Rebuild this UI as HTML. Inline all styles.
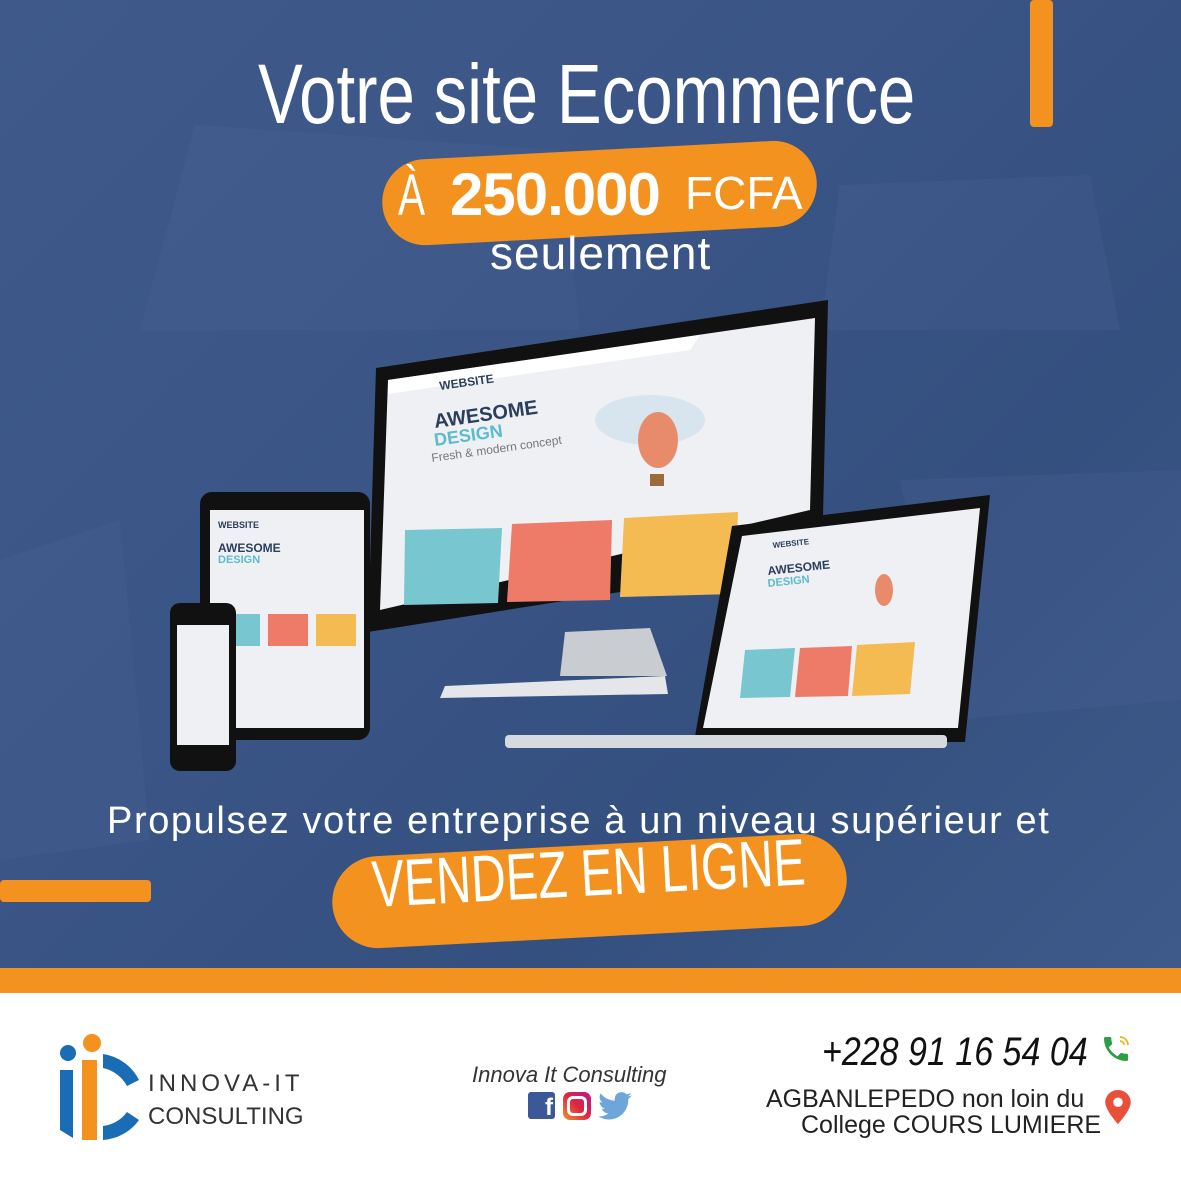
<!DOCTYPE html>
<html><head><meta charset="utf-8"><style>
body{margin:0;width:1181px;height:1181px;overflow:hidden;position:relative;font-family:"Liberation Sans",sans-serif;background:#fff}
.bg{position:absolute;left:0;top:0;width:1181px;height:968px;background:linear-gradient(135deg,#3f5a8a 0%,#3a5586 40%,#34507f 70%,#3d5a8a 100%)}
.t{position:absolute;color:#fff;white-space:nowrap}
</style></head><body>
<div class="bg"></div>
<svg width="1181" height="968" style="position:absolute;left:0;top:0">
<g fill="#4a6596" opacity=".25">
<polygon points="195,125 560,150 580,330 140,330"/>
<polygon points="840,185 1090,175 1120,330 820,330"/>
<polygon points="0,560 120,520 150,840 0,860"/>
<polygon points="900,480 1181,470 1181,700 950,720"/>
</g>
<rect x="1030" y="0" width="23" height="127" rx="4" fill="#f3921f"/>
<rect x="0" y="880" width="151" height="22" rx="4" fill="#f3921f"/>
<polygon points="376,368 828,300 822,560 368,632" fill="#111"/>
<polygon points="388,380 815,318 810,510 380,610" fill="#eef0f3"/>
<polygon points="388,380 700,335 690,350 388,394" fill="#fff"/>
<text x="440" y="390" font-size="12" font-weight="bold" fill="#2c3e5c" transform="rotate(-8 440 390)">WEBSITE</text>
<text x="435" y="428" font-size="20" font-weight="bold" fill="#2c3e5c" transform="rotate(-8 435 428)">AWESOME</text>
<text x="435" y="446" font-size="18" font-weight="bold" fill="#5bbccc" transform="rotate(-8 435 446)">DESIGN</text>
<text x="432" y="462" font-size="12" fill="#777" transform="rotate(-8 432 462)">Fresh &amp; modern concept</text>
<ellipse cx="650" cy="420" rx="55" ry="25" fill="#d8e4ee"/>
<ellipse cx="658" cy="440" rx="20" ry="28" fill="#e88b6a"/><rect x="650" y="474" width="14" height="12" fill="#9b6a3e"/>
<polygon points="405,530 502,528 498,603 404,605" fill="#78c6cf"/>
<polygon points="512,524 612,520 610,600 507,602" fill="#ee7b68"/>
<polygon points="624,518 738,512 735,594 620,597" fill="#f4bb52"/>
<polygon points="565,632 650,628 667,676 560,676" fill="#c9ccd1"/>
<polygon points="445,686 665,676 668,694 440,698" fill="#e4e6ea"/>
<rect x="200" y="492" width="170" height="248" rx="12" fill="#111"/>
<rect x="210" y="510" width="154" height="218" fill="#eef0f3"/>
<text x="218" y="528" font-size="9" font-weight="bold" fill="#2c3e5c">WEBSITE</text>
<text x="218" y="552" font-size="12" font-weight="bold" fill="#2c3e5c">AWESOME</text>
<text x="218" y="563" font-size="11" font-weight="bold" fill="#5bbccc">DESIGN</text>
<rect x="225" y="614" width="35" height="32" fill="#78c6cf"/><rect x="268" y="614" width="40" height="32" fill="#ee7b68"/><rect x="316" y="614" width="40" height="32" fill="#f4bb52"/>
<rect x="170" y="603" width="66" height="168" rx="10" fill="#111"/>
<rect x="177" y="625" width="52" height="120" fill="#eef0f3"/>
<polygon points="732,526 990,495 965,742 694,742" fill="#111"/>
<polygon points="742,536 980,508 958,728 703,728" fill="#eef0f3"/>
<text x="773" y="548" font-size="8" font-weight="bold" fill="#2c3e5c" transform="rotate(-6 773 548)">WEBSITE</text>
<text x="768" y="575" font-size="12" font-weight="bold" fill="#2c3e5c" transform="rotate(-6 768 575)">AWESOME</text>
<text x="768" y="587" font-size="11" font-weight="bold" fill="#5bbccc" transform="rotate(-6 768 587)">DESIGN</text>
<ellipse cx="884" cy="590" rx="9" ry="16" fill="#e88b6a"/>
<polygon points="745,650 795,648 790,697 740,698" fill="#78c6cf"/>
<polygon points="800,648 852,646 848,696 795,697" fill="#ee7b68"/>
<polygon points="857,645 915,642 910,694 852,696" fill="#f4bb52"/>
<rect x="505" y="735" width="442" height="13" rx="4" fill="#d6d9de"/>
<rect x="382" y="150" width="435" height="86" rx="43" fill="#f3921f" transform="rotate(-3 600 193)"/>
<rect x="332" y="845" width="515" height="92" rx="46" fill="#f3921f" transform="rotate(-3 590 891)"/>
</svg>
<div class="t" style="left:258px;top:46px;font-size:84px;transform:scaleX(.8);transform-origin:left">Votre site Ecommerce</div>
<div class="t" style="left:398px;top:162px;font-size:58px;transform:scaleX(.7);transform-origin:left">À</div>
<div class="t" style="left:450px;top:160px;font-size:60px;font-weight:bold;letter-spacing:-1px">250.000</div>
<div class="t" style="left:685px;top:166px;font-size:46px">FCFA</div>
<div class="t" style="left:490px;top:226px;font-size:46px;letter-spacing:1px">seulement</div>
<div class="t" style="left:107px;top:800px;font-size:38px;letter-spacing:1.6px">Propulsez votre entreprise à un niveau supérieur et</div>
<div class="t" style="left:372px;top:846px;font-size:66px;transform:rotate(-3deg) scaleX(.73);transform-origin:left">VENDEZ EN LIGNE</div>
<div style="position:absolute;left:0;top:968px;width:1181px;height:25px;background:#f3921f"></div>
<svg width="100" height="120" style="position:absolute;left:55px;top:1030px">
<circle cx="13" cy="23" r="8" fill="#1a6db5"/><circle cx="37" cy="13" r="9" fill="#f3921f"/>
<path d="M5 40 L18 40 L18 108 L5 100 Z" fill="#1a6db5"/>
<rect x="27" y="30" width="15" height="80" fill="#f3921f"/>
<path d="M48 24 A48 48 0 0 1 84 50 L72 56 A36 36 0 0 0 48 38 Z M48 96 A36 36 0 0 0 72 82 L84 90 A48 48 0 0 1 48 110Z" fill="#1a6db5"/>
</svg>
<div class="t" style="left:148px;top:1070px;font-size:24px;color:#333;letter-spacing:4px">INNOVA-IT</div>
<div class="t" style="left:148px;top:1103px;font-size:24px;color:#333">CONSULTING</div>
<div class="t" style="left:472px;top:1062px;font-size:22px;font-style:italic;color:#333">Innova It Consulting</div>
<div style="position:absolute;left:528px;top:1092px;width:27px;height:27px;background:#3b5998;border-radius:3px;color:#fff;font-weight:bold;font-size:24px;text-align:right;line-height:32px;padding-right:2px;box-sizing:border-box">f</div>
<div style="position:absolute;left:563px;top:1092px;width:28px;height:28px;background:linear-gradient(45deg,#f09433,#dc2743,#bc1888);border-radius:7px"><div style="position:absolute;left:4px;top:4px;width:14px;height:14px;border:3px solid #fff;border-radius:6px"></div></div>
<svg width="34" height="28" viewBox="0 0 24 20" style="position:absolute;left:598px;top:1092px"><path fill="#6ea6d9" d="M24 2.4c-.9.4-1.8.6-2.8.8 1-.6 1.8-1.6 2.2-2.7-1 .6-2 1-3.1 1.2A4.9 4.9 0 0 0 11.9 6.2 14 14 0 0 1 1.7 1a4.9 4.9 0 0 0 1.5 6.6c-.8 0-1.6-.2-2.2-.6 0 2.4 1.7 4.4 3.9 4.8-.7.2-1.5.2-2.2.1.6 2 2.4 3.4 4.6 3.4A9.9 9.9 0 0 1 0 17.4 14 14 0 0 0 7.5 19.6c9.1 0 14-7.5 14-14v-.6c1-.7 1.8-1.6 2.5-2.6z"/></svg>
<div class="t" style="left:822px;top:1030px;font-size:40px;color:#111;font-style:italic;transform:scaleX(.85);transform-origin:left">+228 91 16 54 04</div>
<svg width="32" height="34" viewBox="0 0 24 24" style="position:absolute;left:1100px;top:1032px"><path fill="#2e9e45" d="M6.6 10.8c1.4 2.8 3.8 5.1 6.6 6.6l2.2-2.2c.3-.3.7-.4 1-.2 1.1.4 2.300 .6 3.600 .6.6 0 1 .4 1 1V20c0 .6-.4 1-1 1C10.6 21 3 13.4 3 4c0-.6.4-1 1-1h3.5c.6 0 1 .4 1 1 0 1.3.2 2.5.6 3.6.1.3 0 .7-.2 1z"/><path fill="none" stroke="#f3b21f" stroke-width="1.3" d="M15 3a6 6 0 0 1 6 6M15 6a3 3 0 0 1 3 3"/></svg>
<div class="t" style="left:766px;top:1085px;font-size:25px;color:#222">AGBANLEPEDO non loin du</div>
<div class="t" style="left:801px;top:1111px;font-size:25px;color:#222">College COURS LUMIERE</div>
<svg width="26" height="34" viewBox="0 0 24 32" style="position:absolute;left:1105px;top:1090px"><path fill="#e8503a" d="M12 0C5.4 0 0 5.2 0 11.6 0 19 12 32 12 32s12-13 12-20.4C24 5.2 18.6 0 12 0zm0 16a4.5 4.5 0 1 1 0-9 4.5 4.5 0 0 1 0 9z"/></svg>
</body></html>
